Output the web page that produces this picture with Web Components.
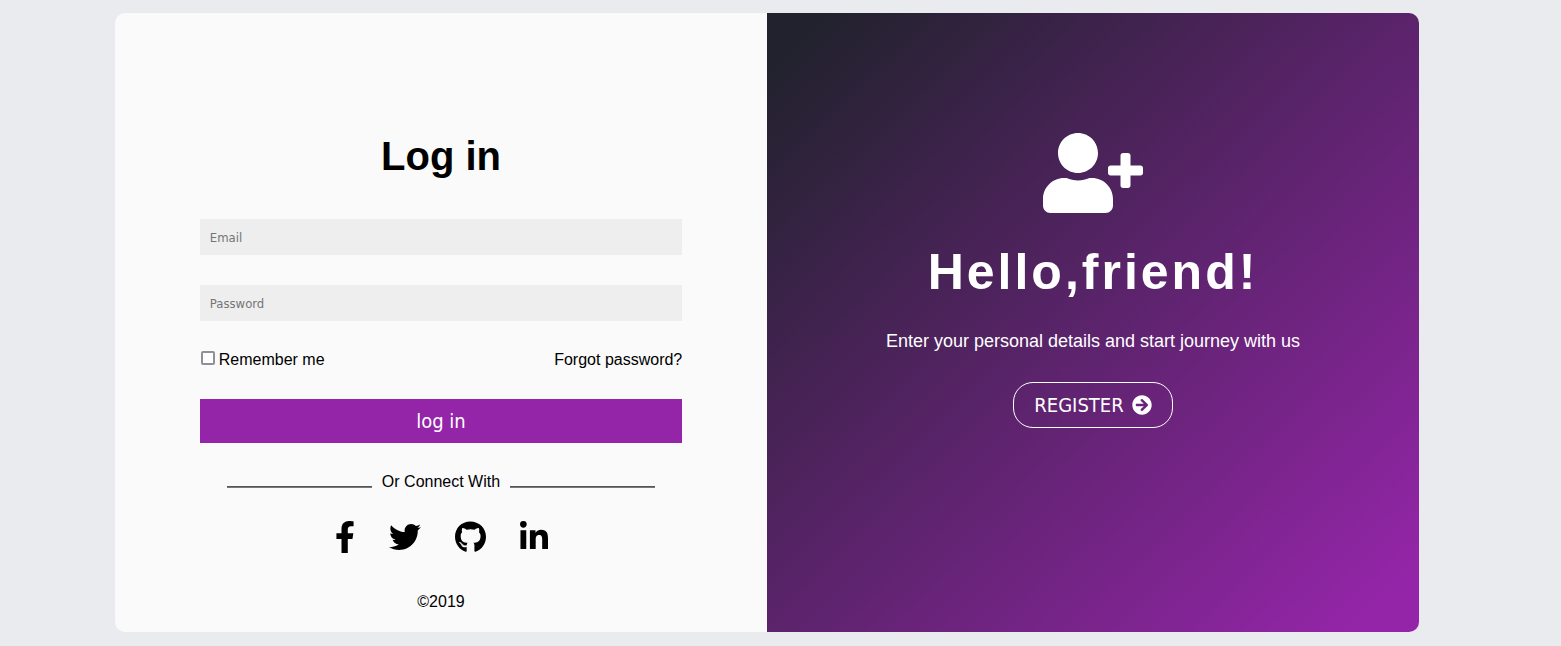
<!DOCTYPE html>
<html lang="en">
<head>
<meta charset="utf-8">
<meta name="viewport" content="width=device-width, initial-scale=1">
<title>Log in</title>
<style>
  :root {
    --accent: #9425a8;
    --ui-font: "DejaVu Sans Condensed", "Noto Sans", sans-serif;
  }
  body {
    margin: 0;
    padding: 13px 142px 13px 115px;
    background: #e9ebee;
    color: #000;
    font: 16px/18px "Liberation Sans", Arial, sans-serif;
  }
</style>
</head>
<body>
<auth-card>
  <login-panel slot="login"></login-panel>
  <welcome-panel slot="welcome"></welcome-panel>
</auth-card>

<script>
const ICONS = {
  facebook: ['0 0 320 512', 'M279.14 288l14.22-92.66h-88.91v-60.13c0-25.35 12.42-50.06 52.24-50.06h40.42V6.26S260.43 0 225.36 0c-73.22 0-121.08 44.38-121.08 124.72v70.62H22.89V288h81.39v224h100.17V288z'],
  twitter: ['0 0 512 512', 'M459.37 151.716c.325 4.548.325 9.097.325 13.645 0 138.72-105.583 298.558-298.558 298.558-59.452 0-114.68-17.219-161.137-47.106 8.447.974 16.568 1.299 25.34 1.299 49.055 0 94.213-16.568 130.274-44.832-46.132-.975-84.792-31.188-98.112-72.772 6.498.974 12.995 1.624 19.818 1.624 9.421 0 18.843-1.3 27.614-3.573-48.081-9.747-84.143-51.98-84.143-102.985v-1.299c13.969 7.797 30.214 12.67 47.431 13.319-28.264-18.843-46.781-51.005-46.781-87.391 0-19.492 5.197-37.36 14.294-52.954 51.655 63.675 129.3 105.258 216.365 109.807-1.624-7.797-2.599-15.918-2.599-24.04 0-57.828 46.782-104.934 104.934-104.934 30.213 0 57.502 12.67 76.67 33.137 23.715-4.548 46.456-13.32 66.599-25.34-7.798 24.366-24.366 44.833-46.132 57.827 21.117-2.273 41.584-8.122 60.426-16.243-14.292 20.791-32.161 39.308-52.628 54.253z'],
  github: ['0 0 496 512', 'M165.9 397.4c0 2-2.3 3.6-5.2 3.6-3.3.3-5.6-1.3-5.6-3.6 0-2 2.3-3.6 5.2-3.6 3-.3 5.6 1.3 5.6 3.6zm-31.1-4.5c-.7 2 1.3 4.3 4.3 4.9 2.6 1 5.6 0 6.2-2s-1.3-4.3-4.3-5.2c-2.6-.7-5.5.3-6.2 2.3zm44.2-1.7c-2.9.7-4.9 2.6-4.6 4.9.3 2 2.9 3.3 5.9 2.6 2.9-.7 4.9-2.6 4.6-4.6-.3-1.9-3-3.2-5.9-2.9zM244.8 8C106.1 8 0 113.3 0 252c0 110.9 69.8 205.8 169.5 239.2 12.8 2.3 17.3-5.6 17.3-12.1 0-6.2-.3-40.4-.3-61.4 0 0-70 15-84.7-29.8 0 0-11.4-29.1-27.8-36.6 0 0-22.9-15.7 1.6-15.4 0 0 24.9 2 38.6 25.8 21.9 38.6 58.6 27.5 72.9 20.9 2.3-16 8.8-27.1 16-33.7-55.9-6.2-112.3-14.3-112.3-110.5 0-27.5 7.6-41.3 23.6-58.9-2.6-6.5-11.1-33.3 2.6-67.9 20.9-6.5 69 27 69 27 20-5.6 41.5-8.5 62.8-8.5s42.8 2.9 62.8 8.5c0 0 48.1-33.6 69-27 13.7 34.7 5.2 61.4 2.6 67.9 16 17.7 25.8 31.5 25.8 58.9 0 96.5-58.9 104.2-114.8 110.5 9.2 7.9 17 22.9 17 46.4 0 33.7-.3 75.4-.3 83.6 0 6.5 4.6 14.4 17.3 12.1C428.2 457.8 496 362.9 496 252 496 113.3 383.5 8 244.8 8zM97.2 352.9c-1.3 1-1 3.3.7 5.2 1.6 1.6 3.9 2.3 5.2 1 1.3-1 1-3.3-.7-5.2-1.6-1.6-3.9-2.3-5.2-1zm-10.8-8.1c-.7 1.3.3 2.9 2.3 3.9 1.6 1 3.6.7 4.3-.7.7-1.3-.3-2.9-2.3-3.9-2-.6-3.6-.3-4.3.7zm32.4 35.6c-1.6 1.3-1 4.3 1.3 6.2 2.3 2.3 5.2 2.6 6.5 1 1.3-1.3.7-4.3-1.3-6.2-2.2-2.3-5.2-2.6-6.5-1zm-11.4-14.7c-1.6 1-1.6 3.6 0 5.9 1.6 2.3 4.3 3.3 5.6 2.3 1.6-1.3 1.6-3.9 0-6.2-1.4-2.3-4-3.3-5.6-2z'],
  linkedin: ['0 0 448 512', 'M100.28 448H7.4V148.9h92.88zM53.79 108.1C24.09 108.1 0 83.5 0 53.8a53.79 53.79 0 0 1 107.58 0c0 29.7-24.1 54.3-53.79 54.3zM447.9 448h-92.68V302.4c0-34.7-.7-79.2-48.29-79.2-48.29 0-55.69 37.7-55.69 76.7V448h-92.78V148.9h89.08v40.8h1.3c12.4-23.5 42.69-48.3 87.88-48.3 94 0 111.28 61.9 111.28 142.3V448z'],
  'user-plus': ['0 0 640 512', 'M624 208h-64v-64c0-8.800-7.200-16-16-16h-32c-8.800 0-16 7.200-16 16v64h-64c-8.800 0-16 7.200-16 16v32c0 8.800 7.200 16 16 16h64v64c0 8.800 7.200 16 16 16h32c8.800 0 16-7.200 16-16v-64h64c8.800 0 16-7.200 16-16v-32c0-8.800-7.200-16-16-16zm-400 48c70.700 0 128-57.300 128-128S294.700 0 224 0 96 57.300 96 128s57.300 128 128 128zm89.600 32h-16.700c-22.200 10.200-46.900 16-72.900 16s-50.600-5.800-72.900-16h-16.700C60.200 288 0 348.200 0 422.400V464c0 26.500 21.500 48 48 48h352c26.500 0 48-21.500 48-48v-41.600c0-74.200-60.200-134.400-134.400-134.400z'],
  'arrow-right': ['0 0 512 512', 'M256 8c137 0 248 111 248 248S393 504 256 504 8 393 8 256 119 8 256 8zm-28.900 143.600l75.500 72.400H120c-13.300 0-24 10.700-24 24v16c0 13.300 10.700 24 24 24h182.600l-75.500 72.400c-9.700 9.300-9.900 24.800-.4 34.300l11 10.900c9.400 9.400 24.600 9.400 33.900 0L404.300 273c9.400-9.400 9.400-24.600 0-33.900L271.600 106.300c-9.400-9.400-24.600-9.400-33.900 0l-11 10.900c-9.500 9.600-9.300 25.100.4 34.400z']
};

/* <ui-icon name="…"> scales to the height given in --icon-size. */
class UiIcon extends HTMLElement {
  connectedCallback() {
    const [box, path] = ICONS[this.getAttribute('name')];
    const root = this.attachShadow({ mode: 'open' });
    root.innerHTML = `
      <style>
        :host { display: block; flex: none; }
        svg { display: block; height: var(--icon-size, 32px); width: auto; fill: currentColor; }
      </style>
      <svg viewBox="${box}" aria-hidden="true"><path d="${path}"/></svg>`;
  }
}

class AuthCard extends HTMLElement {
  constructor() {
    super();
    this.attachShadow({ mode: 'open' }).innerHTML = `
      <style>
        :host { display: grid; grid-template-columns: 1fr 1fr; border-radius: 10px; overflow: hidden; }
      </style>
      <slot name="login"></slot>
      <slot name="welcome"></slot>`;
  }
}

class TextField extends HTMLElement {
  connectedCallback() {
    const label = this.getAttribute('label');
    this.attachShadow({ mode: 'open' }).innerHTML = `
      <style>
        :host { display: block; }
        input {
          display: block; box-sizing: border-box; width: 100%; height: 36px;
          margin: 0; padding: 0 10px; border: 0; border-radius: 0;
          background: #eee; color: #000; font: 13px/16px var(--ui-font);
        }
        input::placeholder { color: #757575; opacity: 1; }
      </style>
      <input type="${this.getAttribute('type')}" placeholder="${label}" aria-label="${label}">`;
  }
}

class SocialLinks extends HTMLElement {
  constructor() {
    super();
    const link = (name, label) => `<a href="#${name}" aria-label="${label}"><ui-icon name="${name}"></ui-icon></a>`;
    this.attachShadow({ mode: 'open' }).innerHTML = `
      <style>
        :host { display: flex; justify-content: center; gap: 34px; --icon-size: 32px; }
        a { color: inherit; }
      </style>
      ${link('facebook', 'Facebook')}${link('twitter', 'Twitter')}${link('github', 'GitHub')}${link('linkedin', 'LinkedIn')}`;
  }
}

class LoginPanel extends HTMLElement {
  constructor() {
    super();
    this.attachShadow({ mode: 'open' }).innerHTML = `
      <style>
        :host { display: block; padding: 120px 13% 21px; background: #fafafa; }
        h1 { margin: 0 0 40px; font-size: 40px; line-height: 46px; text-align: center; }
        form { display: flex; flex-direction: column; gap: 30px; margin: 0; }
        .options { display: flex; justify-content: space-between; }
        label { display: flex; gap: 4px; }
        input {
          appearance: none; box-sizing: border-box; width: 14px; height: 14px;
          margin: 0 0 0 1px; border: 2px solid #8f8f9d; border-radius: 2px; background: #fff;
        }
        input:checked { background: var(--accent); }
        a { color: inherit; text-decoration: none; }
        button {
          height: 44px; padding: 0; border: 0; background: var(--accent); color: #fff;
          font: 20px/24px var(--ui-font); cursor: pointer;
        }
        .divider { display: flex; justify-content: center; align-items: flex-end; gap: 10px; }
        .divider::before, .divider::after {
          content: ""; width: 30%; height: 2px; margin-bottom: 3px; box-sizing: border-box;
          border-top: 1px solid #555; border-bottom: 1px solid #777;
        }
        footer { margin-top: 40px; text-align: center; }
      </style>
      <h1>Log in</h1>
      <form>
        <text-field type="email" label="Email"></text-field>
        <text-field type="password" label="Password"></text-field>
        <div class="options">
          <label for="remember"><input type="checkbox" id="remember">Remember me</label>
          <a href="#forgot">Forgot password?</a>
        </div>
        <button type="button">log in</button>
        <div class="divider">Or Connect With</div>
        <social-links></social-links>
      </form>
      <footer>©2019</footer>`;
  }
}

class WelcomePanel extends HTMLElement {
  constructor() {
    super();
    this.attachShadow({ mode: 'open' }).innerHTML = `
      <style>
        :host {
          display: flex; flex-direction: column; align-items: center; gap: 30px;
          padding-top: 120px; color: #fff; text-align: center;
          background: linear-gradient(to bottom right, #22222e 5%, #9425a8 95%);
        }
        .hero { --icon-size: 80px; }
        h2 { margin: 0; font-size: 50px; line-height: 58px; letter-spacing: 3px; }
        p { margin: 0; font-size: 18px; line-height: 21px; }
        button {
          display: flex; align-items: center; gap: 8px; height: 46px; padding: 0 20px;
          border: 1px solid #fff; border-radius: 20px; background: none; color: inherit;
          font: 20px/24px var(--ui-font); cursor: pointer; --icon-size: 20px;
        }
      </style>
      <ui-icon class="hero" name="user-plus"></ui-icon>
      <h2>Hello,friend!</h2>
      <p>Enter your personal details and start journey with us</p>
      <button type="button">REGISTER <ui-icon name="arrow-right"></ui-icon></button>`;
  }
}

customElements.define('ui-icon', UiIcon);
customElements.define('text-field', TextField);
customElements.define('social-links', SocialLinks);
customElements.define('login-panel', LoginPanel);
customElements.define('welcome-panel', WelcomePanel);
customElements.define('auth-card', AuthCard);
</script>
</body>
</html>
